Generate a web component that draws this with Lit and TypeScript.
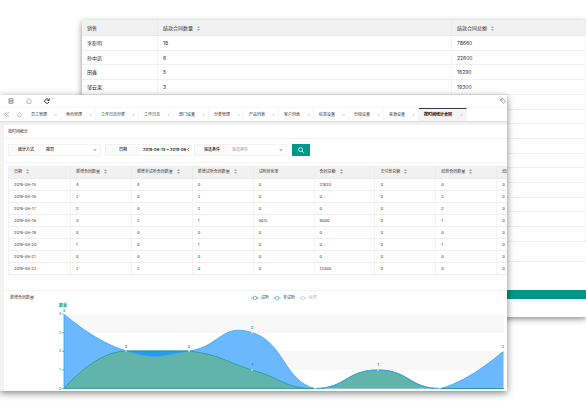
import { LitElement, html, css, svg, nothing } from "lit";
import { customElement } from "lit/decorators.js";
import { classMap } from "lit/directives/class-map.js";

const FONT = css`Inter, "Noto Sans CJK SC", sans-serif`;

const tableBase = css`
  table {
    border-collapse: separate;
    border-spacing: 0;
    table-layout: fixed;
    color: #333;
  }
  th, td {
    padding: 0 0 0 5px;
    text-align: left;
    font-weight: 400;
    white-space: nowrap;
    overflow: hidden;
    box-sizing: border-box;
    border-right: 1px solid #f4f4f4;
    border-bottom: 1px solid #efefef;
  }
  th { background: #f1f1f1; border-color: #ebebeb; }
  svg.sort { display: inline-block; margin-left: 4px; width: 3px; height: 5px; vertical-align: middle; fill: #aaa; stroke: none; }
`;

const sortIcon = html`<svg class="sort" viewBox="0 0 3 5"><path d="M1.5 0 3 2H0zM1.5 5 0 3h3z" /></svg>`;

@customElement("sales-panel")
export class SalesPanel extends LitElement {
  static styles = [
    tableBase,
    css`
      :host { display: block; background: #fff; font: 5px/8px ${FONT}; box-shadow: 0 2px 6px rgba(0, 0, 0, 0.45); }
      table { width: 100%; height: 222px; }
      .name { width: 76px; }
      .count { width: 294px; }
      th { height: 16px; }
      td { height: 14px; }
      .total { height: 19px; border-bottom: 1px solid #f0f0f0; }
      .footer { margin-top: 28px; height: 9px; background: #009688; }
    `,
  ];

  private rows = [
    ["李影明", "18", "78660"],
    ["孙中凯", "6", "22600"],
    ["田鑫", "5", "16290"],
    ["邹云果", "3", "19300"],
    ...Array.from({ length: 10 }, () => ["", "", ""]),
  ];

  render() {
    return html`
      <table>
        <thead>
          <tr>
            <th class="name">销售</th>
            <th class="count">结款合同数量${sortIcon}</th>
            <th>结款合同总额${sortIcon}</th>
          </tr>
        </thead>
        <tbody>
          ${this.rows.map((r) => html`<tr>${r.map((c) => html`<td>${c}</td>`)}</tr>`)}
        </tbody>
      </table>
      <div class="total"></div>
      <div class="footer"></div>
    `;
  }
}

@customElement("contract-chart")
export class ContractChart extends LitElement {
  static styles = css`
    :host { display: block; font: 4px/6px ${FONT}; color: #333; }
    .head { display: grid; grid-template-columns: 54px 1fr; align-items: center; height: 13px; padding: 0 3px 0 6px; }
    h2 { margin: 0; font: inherit; font-weight: 400; }
    .legend { display: flex; justify-content: center; gap: 4px; margin: 0; padding: 0; list-style: none; }
    .legend li { display: flex; align-items: center; gap: 2px; }
    .legend svg { width: 8px; height: 6px; fill: #fff; stroke-width: 0.7; }
    .legend .off { color: #bbb; }
    .plot { display: block; width: 100%; overflow: visible; }
    .plot text { font-size: 4px; text-anchor: middle; }
  `;

  private mark(color: string) {
    return html`<svg viewBox="0 0 8 6"><path d="M0 3H8" stroke=${color} /><circle cx="4" cy="3" r="1.8" stroke=${color} /></svg>`;
  }

  render() {
    const green =
      "M60 84.500C60 84.500 91 47 122 47L185 47C217 51 217 56 248 66C280 75 280 84.500 311 84.500C342 84.500 342 66 374 66C405 66 405 84.500 436 84.500L499.500 84.500";
    const total =
      "M60 10C60 10 91 38 122.500 47C154 56 154 52 185.500 47C217 42 217 19 248 28.500C280 38 280 77 311 84.500C342 84.500 342 66 374 66C405 66 405 84.500 436.500 84.500C468 76 499.500 47 499.500 47";
    const points: [number, number, string, string][] = [
      [60, 8, "4", "#1e9fff"], [122, 44, "2", "#009688"], [185, 44, "2", "#009688"],
      [248, 25, "2", "#1e9fff"], [248, 62, "1", "#009688"], [374, 62, "1", "#009688"], [499, 44, "2", "#1e9fff"],
    ];
    return html`
      <div class="head">
        <h2>新增合同数量</h2>
        <ul class="legend">
          <li>${this.mark("#2ba597")}试听</li>
          <li>${this.mark("#3fa9ff")}非试听</li>
          <li class="off">${this.mark("#ccc")}续费</li>
        </ul>
      </div>
      <svg class="plot" viewBox="0 0 503 87" role="img" aria-label="新增合同数量">
        <rect x="60" y="10" width="440" height="19" fill="#f8f8f8" />
        <rect x="60" y="47" width="440" height="19" fill="#f8f8f8" />
        <path d=${total + "V84.500H60Z"} fill="#6bb8ff" />
        <path d=${green + "H60Z"} fill="#62b3a9" />
        <path d="M122 47C154 56 154 52 185 47Z" fill="#269bec" />
        <path d=${green} fill="none" stroke="#1f9c8f" stroke-width=".8" />
        <path d=${total} fill="none" stroke="#3aa3fb" stroke-width=".8" />
        <path d="M122 47H185M60 84.500H311M436 84.500H500" stroke="#1f9c8f" stroke-width=".8" />
        <path d="M60 10V84" stroke="#3a9fe0" stroke-width=".8" />
        ${[4, 3, 2, 1, 0].map(
          (n, i) => svg`<path d=${`M58 ${10 + i * 18.65}h2`} stroke="#009688" stroke-width=".6" />
            <text x="56" y=${11 + i * 18.65} fill="#009688">${n}</text>`,
        )}
        ${[[60, 10], [122, 47], [185, 47], [248, 28.5], [248, 66], [311, 84.5], [374, 66], [436, 84.5], [499, 47]].map(
          ([x, y]) => svg`<circle cx=${x} cy=${y} r="1" fill="#fff" fill-opacity=".6" />`,
        )}
        <text x="59" y="3" fill="#009688" font-weight="700">数量</text>
        ${points.map(([x, y, t, c]) => svg`<text x=${x} y=${y} fill=${c} font-weight="600">${t}</text>`)}
      </svg>
    `;
  }
}

@customElement("report-window")
export class ReportWindow extends LitElement {
  static styles = [
    css`
      :host {
        display: block;
        overflow: hidden;
        background: #fff;
        color: #222;
        font: 4px/6px ${FONT};
        box-shadow: 0 2px 7px rgba(0, 0, 0, 0.5);
      }
      button { padding: 0; border: 0; background: none; font: inherit; color: inherit; display: flex; align-items: center; justify-content: center; }
      svg { display: block; fill: none; stroke: #777; }
      .toolbar { display: flex; align-items: center; gap: 12px; height: 13px; padding: 0 1px 0 8px; border-bottom: 1px solid #f6f6f6; box-sizing: border-box; }
      .toolbar svg { width: 6px; height: 6px; }
      .dark svg { stroke: #222; }
      .light svg, .toolbar .light svg { stroke: #aaa; }
      .push { margin-left: auto; }
      .tabs { display: flex; height: 13px; box-shadow: 0 1px 1px #ddd; position: relative; }
      .nav { width: 13px; }
      .nav svg { width: 5px; height: 5px; }
      .tab { display: flex; align-items: center; justify-content: space-between; box-sizing: border-box; min-width: 35px; padding: 0 2px 0 5px; border-right: 1px solid #f6f6f6; }
      .tab.wide { min-width: 43px; }
      .tab a { color: #333; text-decoration: none; white-space: nowrap; }
      .tab button { width: 5px; color: #aaa; }
      .tab.active { min-width: 48px; background: #f4f4f4; border-top: 1px solid #393d49; }
      .tab.active a { color: #000; font-weight: 700; }
      .body { padding: 4px 0 0 4px; background: #f2f2f2; }
      .card { background: #fff; overflow: hidden; }
      h1 { margin: 0; padding: 4px 4px 3px; font: inherit; border-bottom: 1px solid #f2f2f2; }
      form { display: flex; gap: 4px; padding: 5px 4px 6px; border-bottom: 1px solid #f4f4f4; }
      .field { display: flex; height: 12px; box-sizing: border-box; border: 1px solid #f2f2f2; position: relative; }
      .field label { width: 34px; text-align: center; line-height: 10px; background: #fafafa; font-weight: 500; }
      .field input, .field select {
        appearance: none; box-sizing: border-box; margin: 0; padding: 0 3px; border: 0; border-radius: 0;
        background: none; font: inherit; font-weight: 500; line-height: 10px; color: #000; width: 57px; height: 10px; outline: 0;
      }
      .field input { width: 49px; padding-right: 0; }
      .field select.empty { color: #aaa; }
      .caret { position: absolute; right: 3px; top: 4px; width: 4px; height: 3px; }
      .search { width: 18px; height: 12px; margin-left: 1px; background: #009688; }
      .search svg { width: 6px; height: 6px; stroke: #fff; }
      .data { margin: 3px 0 0 4px; width: 550px; border-left: 1px solid #f0f0f0; }
      .data th { height: 13px; }
      .data td { height: 12px; }
      .data th:first-child { width: 62px; }
      .chart { display: block; margin-top: 15px; border-top: 1px solid #f2f2f2; }
    `,
    tableBase,
  ];

  private tabs = ["员工管理", "角色管理", "工作日志分类", "工作日志", "部门设置", "分类管理", "产品列表", "客户列表", "标签设置", "分组设置", "来源设置", "按时间统计合同"];
  private heads = ["日期", "新增合同数量", "新增非试听合同数量", "新增试听合同数量", "试听转化率", "合同总额", "支付款总额", "结款合同数量", "结款"];
  private rows = [
    ["2019-06-15", "4", "4", "0", "0", "21820", "0", "0", "0"],
    ["2019-06-16", "2", "0", "2", "0", "0", "0", "2", "0"],
    ["2019-06-17", "2", "0", "2", "0", "0", "0", "2", "0"],
    ["2019-06-18", "3", "2", "1", "50%", "9000", "0", "1", "0"],
    ["2019-06-19", "0", "0", "0", "0", "0", "0", "0", "0"],
    ["2019-06-20", "1", "0", "1", "0", "0", "0", "1", "0"],
    ["2019-06-21", "0", "0", "0", "0", "0", "0", "0", "0"],
    ["2019-06-22", "2", "2", "0", "0", "13300", "0", "0", "0"],
  ];

  render() {
    const caret = html`<svg class="caret" viewBox="0 0 4 3"><path d="M0 0h4L2 2.500z" fill="#bbb" stroke="none" /></svg>`;
    return html`
      <div class="toolbar">
        <button aria-label="菜单"><svg viewBox="0 0 6 6"><path d="M1 .7H5M1 5.300H5M1 2.300H5M1 3.800H5M1 .7V5.300M5 .7V5.300" stroke-width=".7" /></svg></button>
        <button class="light" aria-label="主页"><svg viewBox="0 0 6 6"><path d="M3 .6 5.400 2.500 4.700 5.300H1.300L.6 2.500z" stroke-width=".8" /></svg></button>
        <button class="dark" aria-label="刷新"><svg viewBox="0 0 6 6"><path d="M5 4A2.200 2.200 0 1 1 4.700 1.700M5.200.5V2.400H3.300" stroke-width=".9" /></svg></button>
        <button class="push" aria-label="标签"><svg viewBox="0 0 6 6"><path d="M.7 1 3 .7 5.500 3.200 3.500 5.400 1 3z" stroke-width=".7" /><circle cx="2" cy="2" r=".3" stroke-width=".5" /></svg></button>
      </div>
      <nav class="tabs">
        <button class="nav" aria-label="向左"><svg viewBox="0 0 5 5"><path d="M2.500.3.5 2.500l2 2.200M4.700.3l-2 2.200 2 2.200" stroke-width=".6" /></svg></button>
        <button class="nav light" aria-label="主页"><svg viewBox="0 0 6 6"><path d="M3 .6 5.400 2.500 4.700 5.300H1.300L.6 2.500z" stroke-width=".8" /></svg></button>
        ${this.tabs.map((t, i) => html`
          <div class=${classMap({ tab: true, wide: t.length === 6, active: i === this.tabs.length - 1 })}>
            <a href="#">${t}</a><button aria-label="关闭">×</button>
          </div>`)}
      </nav>
      <div class="body">
        <div class="card">
          <h1>按时间统计</h1>
          <form>
            <div class="field"><label for="mode">统计方式</label><select id="mode"><option>按日</option></select>${caret}</div>
            <div class="field"><label for="date">日期</label><input id="date" value="2019-06-15 ~ 2019-06-22" /></div>
            <div class="field"><label for="cond">筛选条件</label><select id="cond" class="empty"><option>筛选条件</option></select>${caret}</div>
            <button class="search" type="button" aria-label="搜索"><svg viewBox="0 0 6 6"><circle cx="2.600" cy="2.600" r="2" stroke-width=".8" /><path d="M4 4 5.700 5.700" stroke-width=".9" /></svg></button>
          </form>
          <table class="data">
            <thead><tr>${this.heads.map((h, i) => html`<th>${h}${i === 4 ? nothing : sortIcon}</th>`)}</tr></thead>
            <tbody>${this.rows.map((r) => html`<tr>${r.map((c) => html`<td>${c}</td>`)}</tr>`)}</tbody>
          </table>
          <contract-chart class="chart"></contract-chart>
        </div>
      </div>
    `;
  }
}

@customElement("app-root")
export class AppRoot extends LitElement {
  static styles = css`
    :host { display: grid; align-items: start; min-height: 100vh; background: #fff; overflow: hidden; }
    .back, .front { grid-area: 1 / 1; min-width: 0; }
    .back { margin: 20px 0 0 82px; padding-bottom: 18px; }
    .front { margin: 95px 79px 16px 0; z-index: 1; }
  `;

  render() {
    return html`
      <sales-panel class="back"></sales-panel>
      <report-window class="front"></report-window>
    `;
  }
}
